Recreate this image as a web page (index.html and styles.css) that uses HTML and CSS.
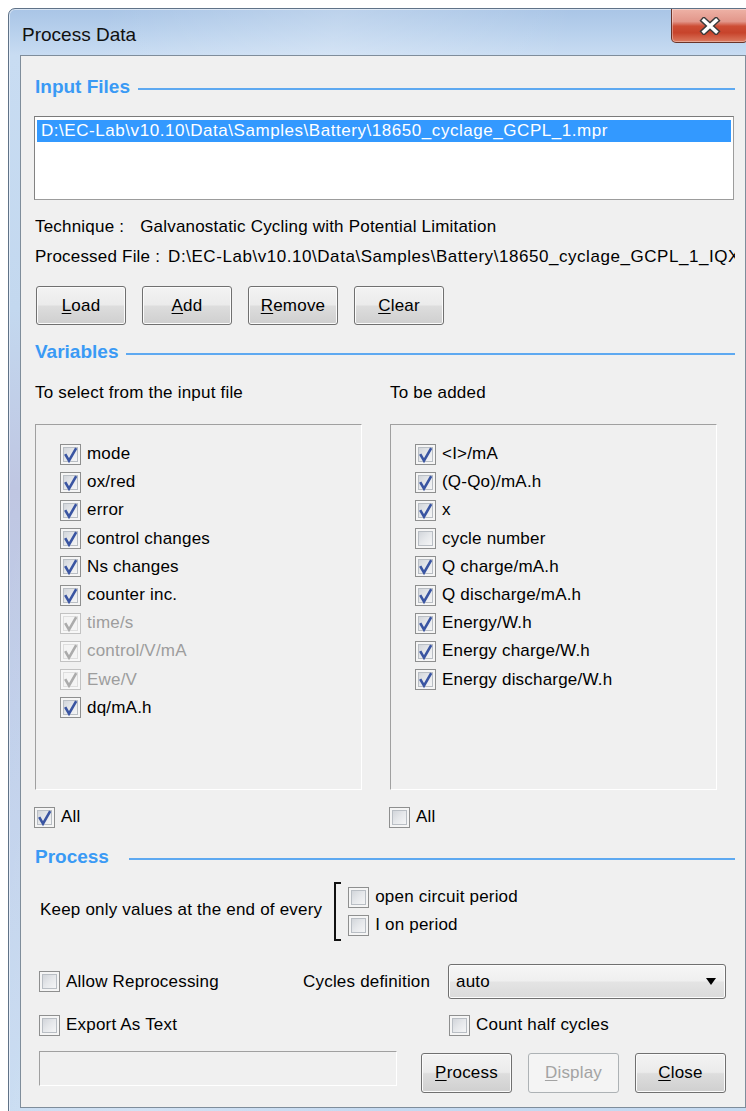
FILE: index.html
```html
<!DOCTYPE html>
<html lang="en">
<head>
<meta charset="utf-8">
<title>Process Data</title>
<link rel="stylesheet" href="styles.css">
</head>
<body>
<svg class="defs" width="0" height="0" aria-hidden="true">
  <symbol id="tick" viewBox="0 0 19 19">
    <path d="M4.2 9.2 L8 15.6 L15.2 3.2" fill="none" stroke="currentColor" stroke-width="2.6" stroke-linejoin="miter"/>
  </symbol>
</svg>

<div class="window">
  <div class="titlebar">
    <span class="title">Process Data</span>
    <button class="close-btn" aria-label="Close">
      <svg width="22" height="18" viewBox="0 0 22 18">
        <path d="M5 3.5 L17 14.5 M17 3.5 L5 14.5" stroke="#3a3a3a" stroke-width="6.4" stroke-linecap="square"/>
        <path d="M5 3.5 L17 14.5 M17 3.5 L5 14.5" stroke="#ffffff" stroke-width="3.6" stroke-linecap="square"/>
      </svg>
    </button>
  </div>

  <div class="client">
    <div class="section-title">Input Files</div>
    <div class="listbox">
      <div class="list-row selected path">D:\EC-Lab\v10.10\Data\Samples\Battery\18650_cyclage_GCPL_1.mpr</div>
    </div>

    <div class="info-line"><span>Technique :</span><span class="info-value tech">Galvanostatic Cycling with Potential Limitation</span></div>
    <div class="info-line"><span>Processed File :</span><span class="info-value path">D:\EC-Lab\v10.10\Data\Samples\Battery\18650_cyclage_GCPL_1_IQX.mpr</span></div>

    <div class="button-row">
      <button class="btn"><u>L</u>oad</button>
      <button class="btn"><u>A</u>dd</button>
      <button class="btn"><u>R</u>emove</button>
      <button class="btn"><u>C</u>lear</button>
    </div>

    <div class="section-title">Variables</div>

    <div class="vars">
      <div class="var-col">
        <div class="col-label">To select from the input file</div>
        <div class="groupbox">
          <label class="check"><span class="box"><svg class="tick"><use href="#tick"/></svg></span>mode</label>
          <label class="check"><span class="box"><svg class="tick"><use href="#tick"/></svg></span>ox/red</label>
          <label class="check"><span class="box"><svg class="tick"><use href="#tick"/></svg></span>error</label>
          <label class="check"><span class="box"><svg class="tick"><use href="#tick"/></svg></span>control changes</label>
          <label class="check"><span class="box"><svg class="tick"><use href="#tick"/></svg></span>Ns changes</label>
          <label class="check"><span class="box"><svg class="tick"><use href="#tick"/></svg></span>counter inc.</label>
          <label class="check disabled"><span class="box"><svg class="tick"><use href="#tick"/></svg></span>time/s</label>
          <label class="check disabled"><span class="box"><svg class="tick"><use href="#tick"/></svg></span>control/V/mA</label>
          <label class="check disabled"><span class="box"><svg class="tick"><use href="#tick"/></svg></span>Ewe/V</label>
          <label class="check"><span class="box"><svg class="tick"><use href="#tick"/></svg></span>dq/mA.h</label>
        </div>
        <label class="check all"><span class="box"><svg class="tick"><use href="#tick"/></svg></span>All</label>
      </div>

      <div class="var-col">
        <div class="col-label">To be added</div>
        <div class="groupbox">
          <label class="check"><span class="box"><svg class="tick"><use href="#tick"/></svg></span>&lt;I&gt;/mA</label>
          <label class="check"><span class="box"><svg class="tick"><use href="#tick"/></svg></span>(Q-Qo)/mA.h</label>
          <label class="check"><span class="box"><svg class="tick"><use href="#tick"/></svg></span>x</label>
          <label class="check"><span class="box"></span>cycle number</label>
          <label class="check"><span class="box"><svg class="tick"><use href="#tick"/></svg></span>Q charge/mA.h</label>
          <label class="check"><span class="box"><svg class="tick"><use href="#tick"/></svg></span>Q discharge/mA.h</label>
          <label class="check"><span class="box"><svg class="tick"><use href="#tick"/></svg></span>Energy/W.h</label>
          <label class="check"><span class="box"><svg class="tick"><use href="#tick"/></svg></span>Energy charge/W.h</label>
          <label class="check"><span class="box"><svg class="tick"><use href="#tick"/></svg></span>Energy discharge/W.h</label>
        </div>
        <label class="check all"><span class="box"></span>All</label>
      </div>
    </div>

    <div class="section-title wide-gap">Process</div>

    <div class="keep-row">
      <span class="keep-text">Keep only values at the end of every</span>
      <span class="bracket"></span>
      <div class="keep-options">
        <label class="check"><span class="box"></span>open circuit period</label>
        <label class="check"><span class="box"></span>I on period</label>
      </div>
    </div>

    <div class="option-row cycles">
      <div class="option-cell">
        <label class="check"><span class="box"></span>Allow Reprocessing</label>
      </div>
      <span class="cycles-label">Cycles definition</span>
      <div class="combo"><span>auto</span><span class="combo-arrow"></span></div>
    </div>

    <div class="option-row export">
      <div class="option-cell wide">
        <label class="check"><span class="box"></span>Export As Text</label>
      </div>
      <label class="check"><span class="box"></span>Count half cycles</label>
    </div>

    <div class="footer-row">
      <div class="status-box"></div>
      <div class="footer-buttons">
        <button class="btn"><u>P</u>rocess</button>
        <button class="btn" disabled><u>D</u>isplay</button>
        <button class="btn"><u>C</u>lose</button>
      </div>
    </div>
  </div>
</div>
</body>
</html>
```

FILE: styles.css
```css
* { box-sizing: border-box; }

html, body {
  margin: 0;
  padding: 0;
}

body {
  width: 746px;
  height: 1111px;
  overflow: hidden;
  background: #ffffff;
  color: #000;
  font-family: "Liberation Sans", Arial, sans-serif;
  font-size: 17px;
  letter-spacing: 0.2px;
}

.defs { position: absolute; width: 0; height: 0; }

/* ---------- window frame ---------- */
.window {
  margin: 8px 0 0 8px;
  width: 750px;
  height: 1110px;
  border: 1px solid #5f7287;
  border-radius: 7px 7px 0 0;
  background:
    linear-gradient(100deg, rgba(255,255,255,0) 10%, rgba(255,255,255,0.22) 35%, rgba(255,255,255,0) 60%),
    linear-gradient(180deg, #a9c5e6 0px, #b7d0ec 22px, #c8dcf2 46px, #c3d8ef 300px, #bfc6e2 480px, #c0cfea 700px, #c5daf1 1110px);
  box-shadow: inset 0 0 0 1px rgba(255,255,255,0.55);
}

.titlebar {
  display: flex;
  height: 46px;
  padding-left: 13px;
}

.title {
  font-family: "Liberation Sans", Arial, sans-serif;
  font-size: 19px;
  line-height: 19px;
  letter-spacing: 0;
  margin-top: 16px;
  color: #101010;
}

.close-btn {
  margin-left: auto;
  margin-right: 9px;
  width: 77px;
  height: 34px;
  padding: 0;
  border: 1px solid #6b3328;
  border-top: none;
  border-radius: 0 0 5px 5px;
  background: linear-gradient(180deg, #eeb2a6 0%, #e2968a 38%, #cd4d35 52%, #c7432b 72%, #dc7a60 100%);
  box-shadow: inset 0 0 0 1px rgba(255,255,255,0.35);
  display: flex;
  align-items: center;
  justify-content: center;
}

/* ---------- client area ---------- */
.client {
  margin: 0 11px;
  height: 1053px;
  border: 1px solid #7f8d9b;
  background: #f0f0f0;
  padding: 19px 10px 0 14px;
}

.section-title {
  display: flex;
  align-items: center;
  height: 24px;
  font-family: "Liberation Sans", Arial, sans-serif;
  font-weight: bold;
  font-size: 19px;
  letter-spacing: 0;
  color: #3a9af5;
}

.section-title::after {
  content: "";
  flex: 1;
  height: 2px;
  margin: 4px 0 0 8px;
  background: #5ea9f1;
}

.section-title.wide-gap::after { margin-left: 20px; }

/* list of input files */
.listbox {
  margin: 17px 0 0 -1px;
  width: 700px;
  height: 84px;
  padding: 3px 2px;
  background: #fff;
  border: 1px solid #9c9c9c;
  border-top-color: #7a7a7a;
  border-left-color: #828282;
}

.list-row {
  height: 22px;
  line-height: 22px;
  padding-left: 4px;
  white-space: nowrap;
}

.list-row.selected {
  background: #3399ff;
  color: #fff;
}

.path { letter-spacing: 0.55px; }

.info-line {
  display: flex;
  height: 30px;
  line-height: 30px;
  white-space: nowrap;
  overflow: hidden;
}

.listbox + .info-line { margin-top: 12px; }

.info-value { margin-left: 8px; }
.info-value.tech { margin-left: 16px; }

/* push buttons */
.button-row {
  display: flex;
  gap: 16px;
  margin: 14px 0 15px 1px;
}

.btn {
  width: 90px;
  height: 39px;
  padding: 0;
  border: 1px solid #707070;
  border-radius: 3px;
  background: linear-gradient(180deg, #f3f3f3 0%, #ebebeb 48%, #dddddd 52%, #cfcfcf 100%);
  box-shadow: inset 0 0 0 1px #fbfbfb;
  font: inherit;
  color: #000;
  letter-spacing: 0.2px;
}

.btn u { text-underline-offset: 2px; }

.btn:disabled {
  border-color: #adb2b5;
  background: #f4f4f4;
  box-shadow: none;
  color: #a3a3a3;
}

/* variable selection */
.vars {
  display: grid;
  grid-template-columns: 327px 327px;
  column-gap: 28px;
  margin-top: 17px;
}

.var-col {
  display: flex;
  flex-direction: column;
}

.col-label {
  height: 24px;
  line-height: 24px;
}

.groupbox {
  margin-top: 19px;
  height: 366px;
  padding: 15px 0 0 24px;
  border: 1px solid #a0a0a0;
  border-right-color: #ffffff;
  border-bottom-color: #ffffff;
}

.check {
  display: flex;
  align-items: center;
  gap: 6px;
  height: 28.2px;
  white-space: nowrap;
}

.check.all {
  height: 24px;
  margin: 15px 0 0 -1px;
}

.box {
  flex: none;
  width: 21px;
  height: 21px;
  border: 1px solid #8e8f8f;
  background: linear-gradient(135deg, #c9cdd3 0%, #e6e8eb 50%, #fbfbfb 100%);
  box-shadow: inset 0 0 0 2px #f5f5f5, inset 0 0 0 3px #b9bec4;
  color: #3a55a2;
  display: flex;
  align-items: center;
  justify-content: center;
}

.tick {
  width: 19px;
  height: 19px;
}

.check.disabled { color: #9d9d9d; }

.check.disabled .box {
  border-color: #c2c2c2;
  background: #f4f4f4;
  box-shadow: inset 0 0 0 2px #f7f7f7, inset 0 0 0 3px #dedede;
  color: #ababab;
}

/* process options */
.section-title.wide-gap { margin-top: 16px; }

.keep-row {
  display: flex;
  align-items: center;
  height: 60px;
  margin-top: 12px;
}

.keep-text { margin-left: 5px; margin-top: -2px; white-space: nowrap; }

.bracket {
  width: 7px;
  height: 59px;
  margin-left: 12px;
  border: 2px solid #111;
  border-right: none;
}

.keep-options {
  display: flex;
  flex-direction: column;
  margin-left: 7px;
}

.keep-options .check { height: 28px; }

.option-row {
  display: flex;
  align-items: center;
}

.option-row.cycles {
  height: 35px;
  margin-top: 23px;
}

.option-row.export {
  height: 24px;
  margin-top: 14px;
}

.option-cell {
  flex: none;
  width: 268px;
  padding-left: 4px;
}

.option-cell.wide { width: 414px; }

.cycles-label {
  flex: none;
  white-space: nowrap;
}

.combo {
  flex: none;
  display: flex;
  align-items: center;
  width: 278px;
  height: 35px;
  margin-left: auto;
  margin-right: 9px;
  padding: 0 9px 0 7px;
  border: 1px solid #707070;
  border-radius: 3px;
  background: linear-gradient(180deg, #f6f6f6 0%, #efefef 48%, #e4e4e4 52%, #dadada 100%);
  box-shadow: inset 0 0 0 1px #fcfcfc;
}

.combo-arrow {
  margin-left: auto;
  width: 0;
  height: 0;
  border-left: 5px solid transparent;
  border-right: 5px solid transparent;
  border-top: 7px solid #000;
}

/* status box and dialog buttons */
.footer-row {
  display: flex;
  align-items: flex-start;
  margin-top: 14px;
}

.status-box {
  width: 358px;
  height: 35px;
  margin-left: 4px;
  border: 1px solid #a0a0a0;
  border-right-color: #ffffff;
  border-bottom-color: #ffffff;
}

.footer-buttons {
  display: flex;
  gap: 16px;
  margin: 2px 0 0 24px;
}

.footer-buttons .btn {
  width: 91px;
  height: 40px;
}
```
